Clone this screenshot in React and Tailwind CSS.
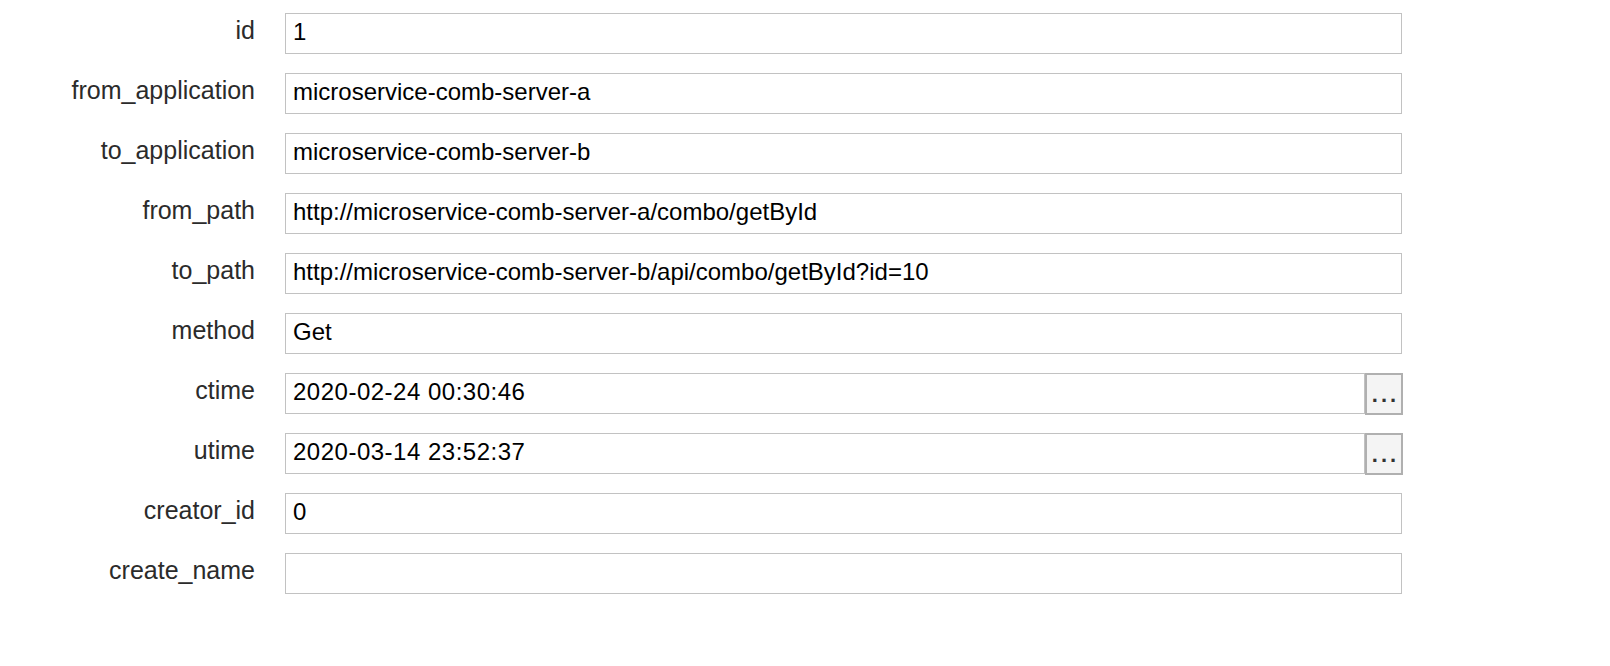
import React from "react";

const fields = [
  { name: "id", value: "1" },
  { name: "from_application", value: "microservice-comb-server-a" },
  { name: "to_application", value: "microservice-comb-server-b" },
  { name: "from_path", value: "http://microservice-comb-server-a/combo/getById" },
  { name: "to_path", value: "http://microservice-comb-server-b/api/combo/getById?id=10" },
  { name: "method", value: "Get" },
  { name: "ctime", value: "2020-02-24 00:30:46", picker: true },
  { name: "utime", value: "2020-03-14 23:52:37", picker: true },
  { name: "creator_id", value: "0" },
  { name: "create_name", value: "" },
];

const FieldRow = ({ field }) => (
  <div className="flex items-center h-[41px]">
    <label className="w-[255px] shrink-0 text-right text-[25px] leading-none text-[#2b2b2b] pb-[7px]">
      {field.name}
    </label>
    <div className="ml-[30px] flex h-full">
      <input
        readOnly
        value={field.value}
        className={`h-full border border-[#c2c2c2] bg-white px-[7px] pb-[3px] text-[24px] text-black outline-none ${
          field.picker ? "w-[1080px] tracking-[0.5px]" : "w-[1117px]"
        }`}
        style={{ fontFamily: "inherit" }}
      />
      {field.picker && (
        <button className="w-[38px] h-[42px] border-2 border-[#b0b0b0] bg-[#f4f4f4] flex items-end justify-center pb-[7px] pl-[3px] text-[22px] font-semibold leading-none tracking-[3px] text-[#333]">
          ...
        </button>
      )}
    </div>
  </div>
);

export default function App() {
  return (
    <div
      className="w-[1610px] h-[666px] bg-white pt-[13px] flex flex-col gap-[19px]"
      style={{ fontFamily: '"Liberation Sans", Arial, sans-serif' }}
    >
      {fields.map(f => (
        <FieldRow key={f.name} field={f} />
      ))}
    </div>
  );
}
